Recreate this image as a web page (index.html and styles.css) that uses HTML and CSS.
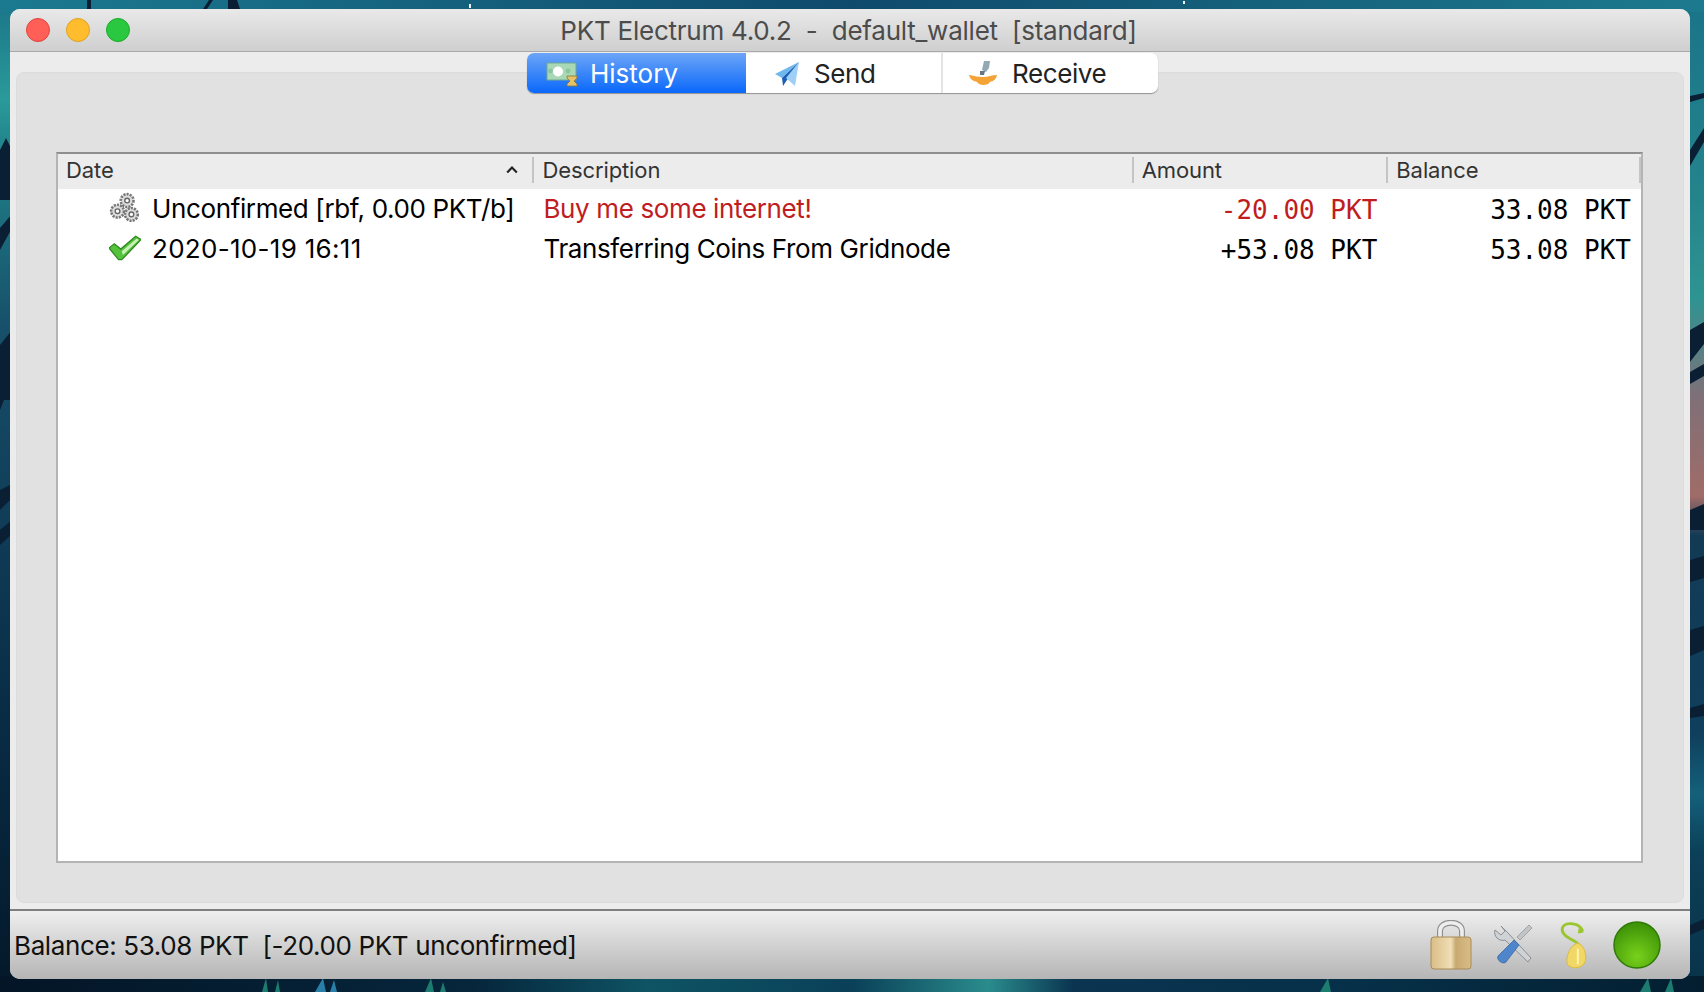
FILE: index.html
```html
<!DOCTYPE html>
<html lang="en">
<head>
<meta charset="utf-8">
<title>PKT Electrum</title>
<link rel="stylesheet" href="styles.css">
</head>
<body>
<svg class="wallpaper" viewBox="0 0 1704 992" preserveAspectRatio="none" aria-hidden="true">
  <defs>
    <linearGradient id="wpLeft" x1="0" x2="0" y1="0" y2="1">
      <stop offset="0" stop-color="#1a7488"/><stop offset=".1" stop-color="#2a9a9a"/><stop offset=".16" stop-color="#1f7f88"/>
      <stop offset=".33" stop-color="#17506a"/><stop offset=".55" stop-color="#0f3a55"/><stop offset=".75" stop-color="#082a42"/><stop offset="1" stop-color="#04182a"/>
    </linearGradient>
    <linearGradient id="wpRight" x1="0" x2="0" y1="0" y2="1">
      <stop offset="0" stop-color="#1a7488"/><stop offset=".2" stop-color="#24848c"/><stop offset=".3" stop-color="#2e9492"/>
      <stop offset=".4" stop-color="#7f7078"/><stop offset=".5" stop-color="#a06c68"/><stop offset=".54" stop-color="#123a55"/>
      <stop offset=".74" stop-color="#0f3f5c"/><stop offset=".8" stop-color="#14607a"/><stop offset=".86" stop-color="#0c3f58"/><stop offset="1" stop-color="#08334a"/>
    </linearGradient>
    <linearGradient id="wpTop" x1="0" x2="1" y1="0" y2="0">
      <stop offset="0" stop-color="#1b7a90"/><stop offset=".5" stop-color="#0f4a6c"/><stop offset="1" stop-color="#1c7a8e"/>
    </linearGradient>
    <linearGradient id="wpBottom" x1="0" x2="1" y1="0" y2="0">
      <stop offset="0" stop-color="#031526"/><stop offset=".28" stop-color="#06263c"/><stop offset=".38" stop-color="#0e5464"/><stop offset=".5" stop-color="#0a4058"/>
      <stop offset=".58" stop-color="#2a8c8c"/><stop offset=".63" stop-color="#0a3450"/><stop offset=".8" stop-color="#063048"/><stop offset="1" stop-color="#041e30"/>
    </linearGradient>
  </defs>
  <rect x="0" y="0" width="12" height="992" fill="url(#wpLeft)"/>
  <rect x="1688" y="0" width="16" height="992" fill="url(#wpRight)"/>
  <rect x="0" y="0" width="1704" height="12" fill="url(#wpTop)"/>
  <rect x="0" y="976" width="1704" height="16" fill="url(#wpBottom)"/>
  <g fill="#0a1f33">
    <path d="M87 0h4v9h-4zM209 0h4l-6 9h-4zM228 0h9l3 9h-12z"/>
    <path d="M0 150l6-12 6 12v50H0zM0 228l12-14v14L0 250zM0 345l12-15v70H4l-4 10zM0 490l12-6v14L0 510zM0 530l12-10v14L0 545z"/>
    <path d="M1690 96l14-3v5l-14 4zM1690 150l14-22v14l-14 24zM1690 330l14-8v22l-14 18zM1690 372l14-8v12l-14 8zM1690 510l14-6v26h-14zM1690 560l14-4v22l-14 4zM1690 630l14-4v24l-14 6zM1690 708l14-4v12l-14 2zM1690 925l14-6v10l-14 6z"/>
  </g>
  <g fill="#e8f4f4">
    <rect x="469" y="4" width="2" height="4"/>
    <rect x="1183" y="1" width="2" height="3"/>
  </g>
  <g fill="#1c7c70">
    <path d="M262 992l4-14 2 14zM275 992l3-12 2 12zM425 992l6-14 3 14zM440 992l3-10 3 10zM1320 992l8-14 3 14zM1640 992l8-14 3 14zM1665 992l6-14 3 14z"/>
  </g>
  <path d="M315 992l8-14 3 14zM330 992l4-12 3 12z" fill="#2a7fa8"/>
</svg>
<main class="window">
  <header class="titlebar">
    <div class="lights">
      <span class="light red"></span>
      <span class="light yellow"></span>
      <span class="light green"></span>
    </div>
    <div class="title">PKT Electrum 4.0.2&nbsp; -&nbsp; default_wallet&nbsp; [standard]</div>
  </header>
  <section class="content">
    <nav class="tabs">
      <div class="tab tab-active tab-history">
        <svg class="tab-icon" viewBox="0 0 32 26"><rect x="1" y="2" width="29" height="17" fill="#a8d8b4" stroke="#6fa895"/><circle cx="12" cy="10.5" r="5" fill="#fff"/><circle cx="4.5" cy="10" r="2.4" fill="#8cc4a0"/><circle cx="22" cy="10" r="2.4" fill="#8cc4a0"/><path d="M21 15h10v2l-3 3 3 3v2H21v-2l3-3-3-3z" fill="#e3c26a" stroke="#8c7434" stroke-width=".8"/></svg>
        <span>History</span>
      </div>
      <div class="tab tab-send">
        <svg class="tab-icon" viewBox="0 0 26 26"><path d="M25 1L1 13l7 4z" fill="#6fb8ee"/><path d="M25 1L8 17l1 8z" fill="#1d5fb5"/><path d="M25 1L12 17l9 8z" fill="#9ed0f5"/></svg>
        <span>Send</span>
      </div>
      <div class="tab tab-receive">
        <svg class="tab-icon" viewBox="0 0 28 26"><path d="M15 0h6l-1 7-3 4-4-2z" fill="#93a7b4"/><path d="M11 10h5l-1 4h-4z" fill="#607888"/><path d="M0 14c6 1 9 2 14 2 5 0 9-2 14-2-1 5-4 6-7 7-2 4-11 4-13 0-3-1-7-2-8-7z" fill="#f4a437"/></svg>
        <span>Receive</span>
      </div>
    </nav>
    <div class="table">
      <div class="thead">
        <div class="th col-date"><span>Date</span>
          <svg class="sort" viewBox="0 0 10 6"><path d="M1 5l4-4 4 4" fill="none" stroke="#222" stroke-width="1.8"/></svg>
        </div>
        <div class="th col-desc">Description</div>
        <div class="th col-amount">Amount</div>
        <div class="th col-balance">Balance</div>
      </div>
      <div class="row">
        <div class="td col-date">
          <svg class="row-icon" viewBox="0 0 30 30">
            <g fill="#ddd" stroke="#777" stroke-width="2.4" stroke-dasharray="2 1">
              <circle cx="17" cy="8" r="6"/><circle cx="8" cy="18" r="6"/><circle cx="21" cy="21" r="6"/>
            </g>
            <g fill="#fff" stroke="#666" stroke-width="1.3"><circle cx="17" cy="8" r="2.2"/><circle cx="8" cy="18" r="2.2"/><circle cx="21" cy="21" r="2.2"/></g>
          </svg>
          <span>Unconfirmed [rbf, 0.00 PKT/b]</span>
        </div>
        <div class="td col-desc red-text">Buy me some internet!</div>
        <div class="td col-amount num red-text">-20.00 PKT</div>
        <div class="td col-balance num">33.08 PKT</div>
      </div>
      <div class="row">
        <div class="td col-date">
          <svg class="row-icon" viewBox="1 1 30 24"><path d="M1 13l5-4 6 5L26 2l5 3-18 19h-3z" fill="#55c23c" stroke="#2f8a22" stroke-width="1.2"/><path d="M13 16L27 4l2 1.5-15 14z" fill="#c9f0b5"/></svg>
          <span class="datetime">2020-10-19 16:11</span>
        </div>
        <div class="td col-desc">Transferring Coins From Gridnode</div>
        <div class="td col-amount num">+53.08 PKT</div>
        <div class="td col-balance num">53.08 PKT</div>
      </div>
    </div>
  </section>
  <footer class="statusbar">
    <div class="balance">Balance: 53.08 PKT&nbsp; [-20.00 PKT unconfirmed]</div>
    <div class="status-icons">
      <svg class="status-icon" viewBox="0 0 44 50">
        <defs><linearGradient id="lockBody" x1="0" x2="1" y1="0" y2="0"><stop offset="0" stop-color="#d9bd86"/><stop offset=".5" stop-color="#f0deb6"/><stop offset=".62" stop-color="#c9a971"/><stop offset="1" stop-color="#d8bd88"/></linearGradient></defs>
        <path d="M11 20V11c0-11 22-11 22 0v9" fill="none" stroke="#8f8f8f" stroke-width="6"/>
        <path d="M11 20V11c0-11 22-11 22 0v9" fill="none" stroke="#eeeeee" stroke-width="3.6"/>
        <rect x="2" y="17" width="40" height="32" rx="3" fill="url(#lockBody)" stroke="#a88a56"/>
      </svg>
      <svg class="status-icon" viewBox="0 0 44 46">
        <path d="M10 4l8 8 22 24-3 4L14 18C8 20 2 14 4 8l6 5 4-4z" fill="#d0d3d5" stroke="#8c8f92"/>
        <path d="M38 3l3 3-12 12-3-3z" fill="#c2c5c7" stroke="#8c8f92" stroke-width=".7"/>
        <path d="M23 18l5 5-13 17c-3 3-10-2-8-6z" fill="#4f86cb" stroke="#305f9a" stroke-width=".7"/>
      </svg>
      <svg class="status-icon seed" viewBox="0 0 34 52">
        <path d="M26 12C24 3 8 1 5 8c-2 7 7 11 14 15 4 3 6 5 6 9" fill="none" stroke="#9ac52d" stroke-width="3"/>
        <path d="M22 8l5 5-6 1z" fill="#9ac52d"/>
        <path d="M21 24c7 3 9 12 8 18-2 9-15 10-19 4-2-8 3-20 11-22z" fill="#f1d866" stroke="#d8b93f"/>
        <path d="M21 30v16" stroke="#fff3b0" stroke-width="2"/>
      </svg>
      <svg class="status-icon light-icon" viewBox="0 0 48 48">
        <defs><radialGradient id="ball" cx=".5" cy=".75" r=".7"><stop offset="0" stop-color="#78d11b"/><stop offset="1" stop-color="#3f9408"/></radialGradient></defs>
        <circle cx="24" cy="24" r="23" fill="url(#ball)" stroke="#2f7a08" stroke-width="1.5"/>
      </svg>
    </div>
  </footer>
</main>
</body>
</html>
```
FILE: styles.css
```css
* { box-sizing: border-box; }
html, body { height: 100%; }
body {
  margin: 0;
  height: 992px;
  padding: 9px 14px 13px 10px;
  overflow: hidden;
  position: relative;
  background: #0e3a55;
  font-family: Inter, "Liberation Sans", sans-serif;
}
.wallpaper { position: absolute; inset: 0; width: 100%; height: 100%; }
.window {
  position: relative;
  height: 970px;
  display: flex;
  flex-direction: column;
  border-radius: 10px;
  overflow: hidden;
  background: #ececec;
}
.titlebar {
  height: 43px;
  flex: none;
  position: relative;
  display: flex;
  align-items: center;
  justify-content: center;
  padding: 1px 3px 0 0;
  background: linear-gradient(180deg, #e9e9e9, #cfcfcf);
  border-bottom: 1px solid #a9a9a9;
}
.lights {
  position: absolute;
  left: 16px;
  top: 9px;
  display: flex;
  gap: 16px;
}
.light {
  width: 24px;
  height: 24px;
  border-radius: 50%;
  border: 1px solid;
}
.red { background: #ff5f57; border-color: #e0443e; }
.yellow { background: #ffbd2e; border-color: #dea123; }
.green { background: #2ac840; border-color: #1aab29; }
.title {
  font-size: 26px;
  letter-spacing: -0.24px;
  color: #4c4c4c;
  white-space: nowrap;
}
.content {
  flex: 1;
  margin: 20px 6px 6px 6px;
  background: #e1e1e1;
  border: 1px solid #dcdcdc;
  border-radius: 8px;
  padding: 79px 40px 39px 39px;
  display: flex;
  flex-direction: column;
  position: relative;
}
.tabs {
  position: absolute;
  top: -20px;
  left: 510px;
  width: 631px;
  height: 40px;
  display: flex;
  background: #fff;
  border-radius: 7px;
  box-shadow: 0 1px 1px rgba(0,0,0,.35);
  overflow: hidden;
  font-size: 26px;
  letter-spacing: -0.4px;
  color: #222;
}
.tab {
  display: flex;
  align-items: center;
  height: 100%;
  padding-top: 1px;
}
.tab-history {
  width: 219px;
  padding-left: 19px;
  gap: 12px;
  letter-spacing: 0;
  color: #fff;
  background: linear-gradient(180deg, #6ca5f7, #0a68fb);
}
.tab-send {
  width: 197px;
  padding-left: 28px;
  gap: 14px;
  border-right: 2px solid #e4e4e4;
}
.tab-receive {
  flex: 1;
  padding-left: 26px;
  gap: 15px;
}
.tab-icon { flex: none; height: 26px; width: 32px; }
.tab-send .tab-icon { width: 26px; }
.tab-receive .tab-icon { width: 28px; }
.table {
  flex: 1;
  background: #fff;
  border: 2px solid #b4b4b4;
  border-top-color: #8f8f8f;
}
.thead {
  height: 35px;
  padding-top: 3px;
  display: flex;
  align-items: flex-start;
  background: #ececec;
}
.th {
  height: 26px;
  display: flex;
  align-items: center;
  justify-content: space-between;
  font-size: 22px;
  letter-spacing: -0.1px;
  color: #333;
  padding: 0 8px;
  border-right: 2px solid #c4c4c4;
}
.row {
  height: 40px;
  display: flex;
  align-items: center;
}
.td {
  display: flex;
  align-items: center;
  font-size: 26px;
  letter-spacing: -0.37px;
  color: #000;
  white-space: nowrap;
  padding: 0 10px 2px;
}
.col-date { width: 477px; }
.col-desc { width: 600px; }
.col-amount { width: 255px; }
.col-balance { width: 253px; }
.th.col-date { padding-right: 14px; }
.td.col-date { padding-left: 51px; gap: 11px; }
.td.col-desc { padding-left: 9px; }
.datetime { letter-spacing: 0.3px; }
.num {
  justify-content: flex-end;
  padding: 1px 10px 0;
  font-family: "DejaVu Sans Mono", monospace;
  font-size: 26px;
  letter-spacing: 0;
}
.col-amount.num { padding-right: 11px; }
.red-text { color: #bf1d22; }
.sort { width: 12px; height: 8px; }
.row-icon { width: 32px; height: 32px; flex: none; }
.statusbar {
  height: 70px;
  flex: none;
  display: flex;
  align-items: center;
  justify-content: space-between;
  padding: 0 29px 0 4px;
  background: linear-gradient(180deg, #efefef, #b5b5b5);
  border-top: 2px solid #7f7f7f;
}
.balance {
  font-size: 26px;
  letter-spacing: -0.38px;
  color: #111;
  white-space: nowrap;
}
.status-icons {
  display: flex;
  align-items: center;
  gap: 18px;
}
.status-icon { width: 44px; height: 50px; flex: none; }
.seed { width: 34px; margin: 0 4px; }
.light-icon { width: 48px; height: 48px; }
```
